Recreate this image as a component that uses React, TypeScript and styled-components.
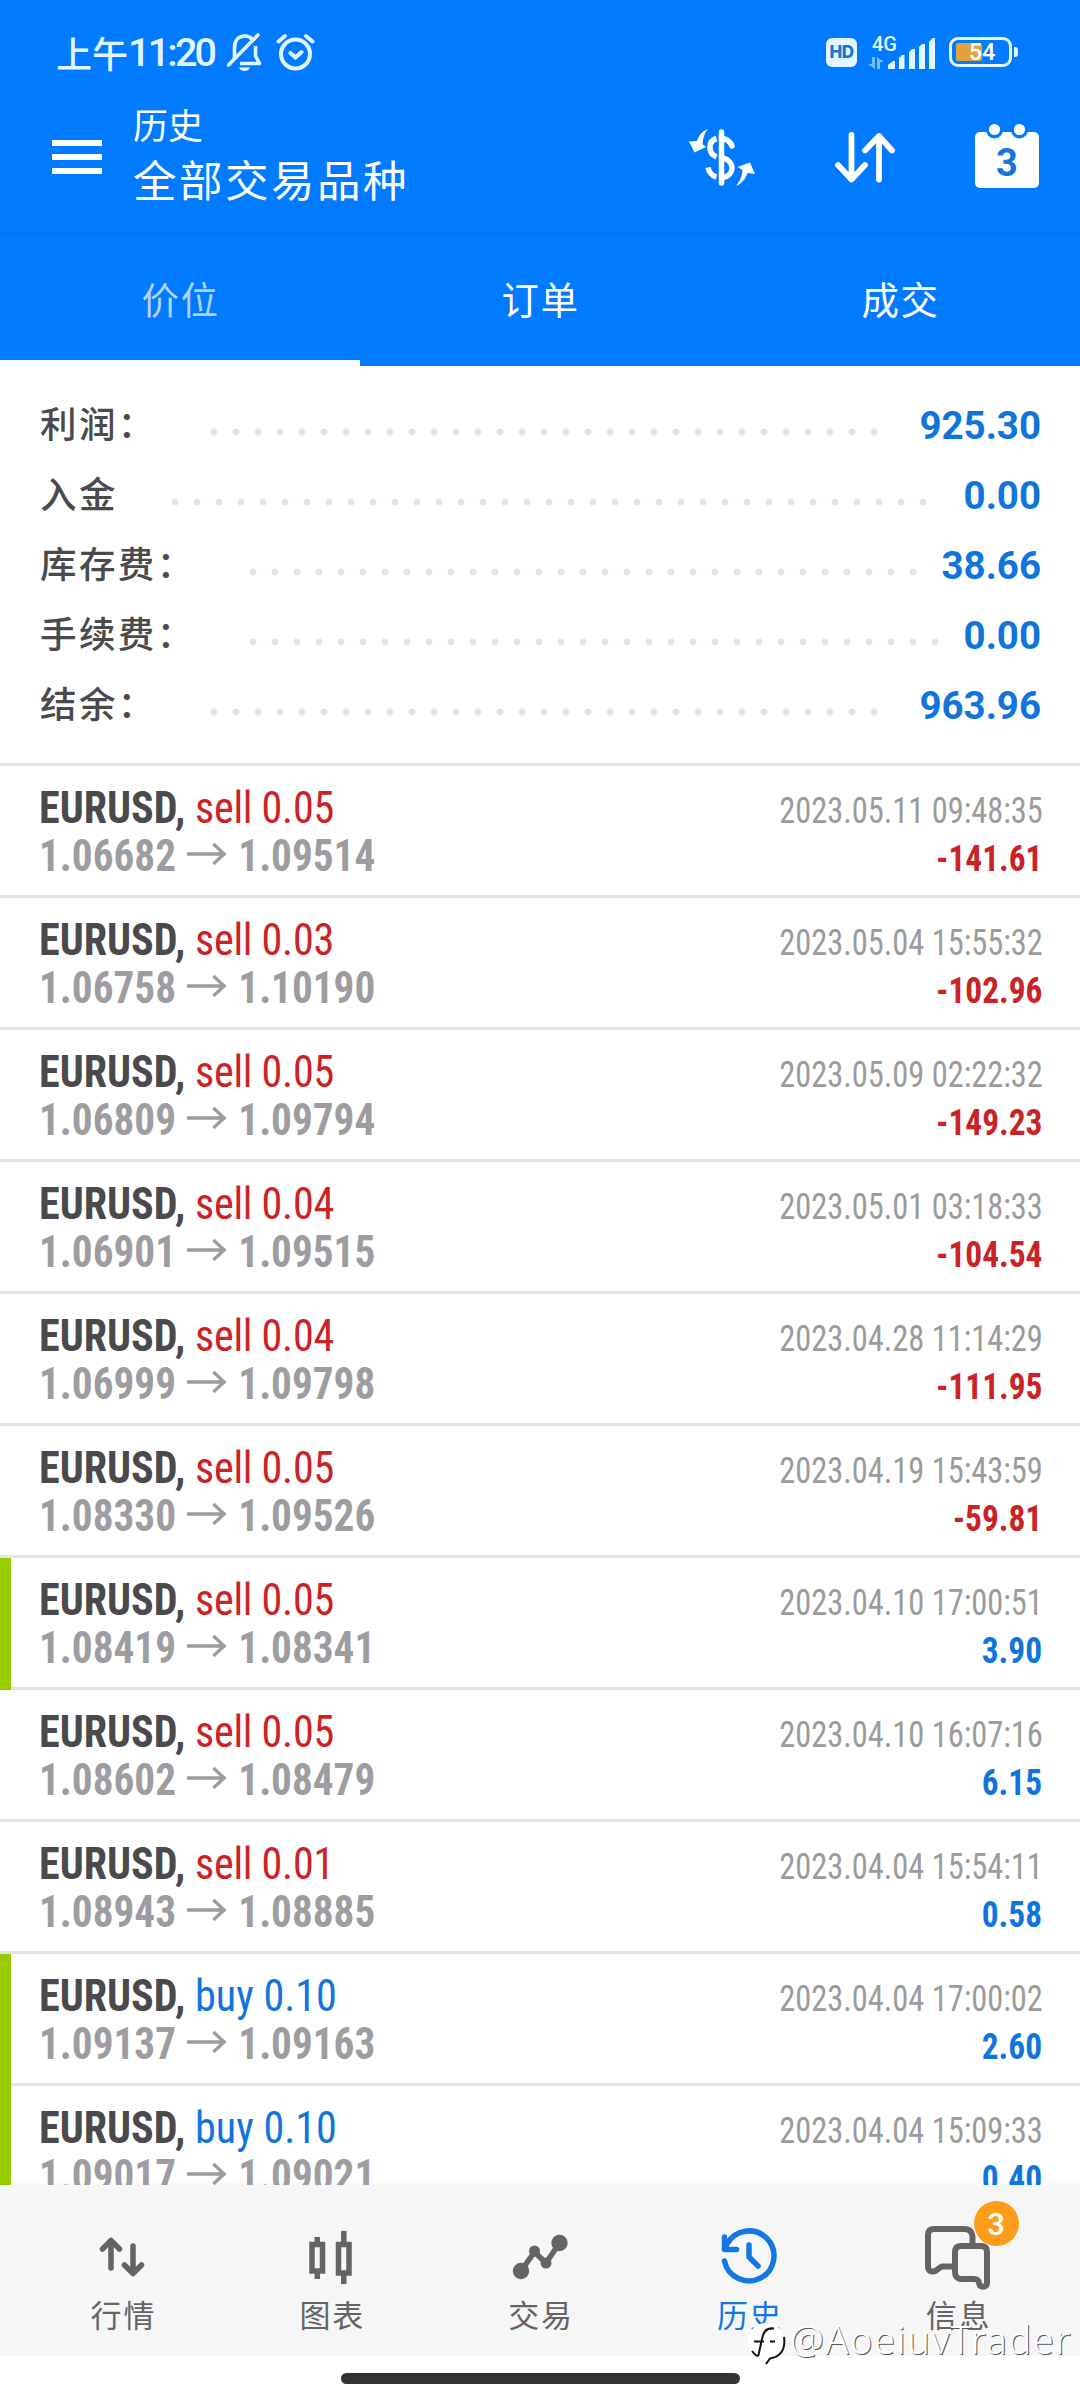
import React from "react";
import styled, { createGlobalStyle } from "styled-components";

const C = {
  blue: "#007aff",
  value: "#0f75dc",
  red: "#cb2226",
  ink: "#4a4a4d",
  grey: "#9d9da1",
  date: "#9b9b9b",
  line: "#e4e4e4",
  nav: "#646464",
  status: "#e2f6ff",
};
const cjk = `"Noto Sans CJK SC", sans-serif`;
const latin = `Roboto, "Noto Sans CJK SC", sans-serif`;
const narrow = `"Roboto Condensed", Roboto, sans-serif`;

const Global = createGlobalStyle`
  * { box-sizing: border-box; }
  body { margin: 0; background: #fff; }
  svg { display: block; flex: none; }
`;

const Screen = styled.div`
  width: 1080px;
  height: 2400px;
  display: flex;
  flex-direction: column;
  overflow: hidden;
  position: relative;
  background: #fff;
`;

const StatusBar = styled.div`
  height: 104px;
  flex: none;
  background: ${C.blue};
  color: ${C.status};
  display: flex;
  align-items: center;
  justify-content: space-between;
  padding: 0 62px 0 56px;
`;
const StatusGroup = styled.div`
  display: flex;
  align-items: center;
`;
const ClockPrefix = styled.span`
  font: 500 36px/50px ${cjk};
`;
const Clock = styled.span`
  font: 500 39.5px/53px ${latin};
  letter-spacing: -2.8px;
  margin-right: 13px;
`;
const HdBadge = styled.span`
  width: 31px;
  height: 29px;
  border-radius: 6px;
  background: ${C.status};
  color: #1b74cf;
  font: 800 17px/29px Inter, sans-serif;
  text-align: center;
  letter-spacing: -0.5px;
  margin-right: 11px;
`;
const Network = styled.div`
  display: flex;
  align-items: flex-end;
  height: 34px;
  margin-right: 14px;
`;
const NetType = styled.div`
  width: 20px;
  height: 34px;
  display: flex;
  flex-direction: column;
  justify-content: space-between;
  font: 500 20px/18px ${latin};
  white-space: nowrap;
`;
const NetLabel = styled.span`
  margin-left: 4px;
`;
const Battery = styled.div`
  width: 63px;
  height: 30px;
  border: 3px solid ${C.status};
  border-radius: 9px;
  padding: 3px 4px;
  position: relative;
  display: flex;
`;
const BatteryFill = styled.div`
  width: 26px;
  background: #dfa23c;
  border-radius: 2px;
`;
const BatteryText = styled.span`
  position: absolute;
  inset: 0 0 0 3px;
  text-align: center;
  color: #fff;
  font: 500 23.5px/25px ${latin};
`;
const BatteryTip = styled.div`
  width: 4px;
  height: 10px;
  margin-left: 2px;
  border-radius: 0 3px 3px 0;
  background: ${C.status};
`;

const Toolbar = styled.header`
  height: 131px;
  flex: none;
  background: ${C.blue};
  border-bottom: 3px solid #0073f0;
  display: flex;
  align-items: flex-start;
  padding: 0 41px 0 52px;
`;
const Burger = styled.div`
  width: 50px;
  margin: 36px 31px 0 0;
  display: grid;
  gap: 8px;
`;
const BurgerBar = styled.i`
  height: 6px;
  background: #fff;
`;
const Titles = styled.div`
  flex: 1;
  color: #fff;
  font-family: ${cjk};
`;
const Subtitle = styled.div`
  font-size: 35px;
  line-height: 39px;
`;
const Title = styled.h1`
  margin: 11px 0 0;
  font-size: 43.5px;
  font-weight: 400;
  line-height: 50px;
  letter-spacing: 2.5px;
`;
const Tools = styled.div`
  display: flex;
  gap: 80px;
  padding-top: 19px;
`;

const Tabs = styled.nav`
  height: 131px;
  flex: none;
  background: ${C.blue};
  display: grid;
  grid-template-columns: repeat(3, 1fr);
`;
const Tab = styled.div<{ $active?: boolean }>`
  height: 131px;
  text-align: center;
  text-indent: 1px;
  font: 400 37.5px/125px ${cjk};
  letter-spacing: 1.4px;
  color: ${(p) => (p.$active ? "#b0d1f5" : "#fff")};
  box-shadow: inset 0 -6px 0 ${(p) => (p.$active ? "#fff" : "transparent")};
`;

const Summary = styled.section`
  height: 400px;
  flex: none;
  padding: 24px 39px 0 40px;
  border-bottom: 3px solid ${C.line};
`;
const SummaryRow = styled.div`
  height: 70px;
  display: flex;
  align-items: flex-start;
`;
const SummaryLabel = styled.span`
  font: 500 36.5px/66px ${cjk};
  letter-spacing: 2.4px;
  color: ${C.ink};
  margin-right: 46px;
`;
const Leader = styled.div<{ $dots: number }>`
  width: ${(p) => p.$dots * 22}px;
  height: 8px;
  margin-top: 38px;
  background: radial-gradient(circle at 11px 4px, #e3e3e5 3px, transparent 4px) 0 0 / 22px 8px repeat-x;
`;
const SummaryValue = styled.span`
  margin-left: auto;
  font: 700 38.5px/71px ${latin};
  color: ${C.value};
`;

const List = styled.main`
  flex: 1;
  min-height: 0;
  overflow: hidden;
`;
const Deal = styled.article<{ $marked?: boolean }>`
  height: 132px;
  padding: 18px 38px 0 39px;
  background:
    linear-gradient(#99cc00, #99cc00) 0 0 / ${(p) => (p.$marked ? 11 : 0)}px 132px no-repeat,
    linear-gradient(${C.line}, ${C.line}) 0 129px / 100% 3px no-repeat;
`;
const Line = styled.div`
  height: 48px;
  line-height: 48px;
  display: flex;
  justify-content: space-between;
  align-items: baseline;
  font-family: ${narrow};
  font-size: 44px;
  white-space: nowrap;
`;
const Order = styled.span`
  transform: scaleX(0.957);
  transform-origin: left;
`;
const Instrument = styled.span`
  font-weight: 700;
  color: ${C.ink};
`;
const Volume = styled.span<{ $side: string }>`
  font-weight: 400;
  letter-spacing: ${(p) => (p.$side === "buy" ? 0 : -0.3)}px;
  color: ${(p) => (p.$side === "buy" ? C.value : C.red)};
`;
const Prices = styled.span`
  font-weight: 700;
  color: ${C.grey};
  display: flex;
  align-items: baseline;
  transform: scaleX(0.937);
  transform-origin: left;
`;
const ArrowSvg = styled.svg`
  margin: 0 11.5px 0 12px;
`;
const DateText = styled.span`
  font-size: 36px;
  color: ${C.date};
  transform: scaleX(0.9);
  transform-origin: right;
  margin-right: -1px;
`;
const Profit = styled.span<{ $loss: boolean }>`
  font-size: 36px;
  font-weight: 700;
  color: ${(p) => (p.$loss ? C.red : C.value)};
  transform: scaleX(0.927);
  transform-origin: right;
`;

const BottomNav = styled.footer`
  height: 171px;
  flex: none;
  background: #f6f6f6;
  box-shadow: 0 -2px 3px rgba(0, 0, 0, 0.03);
  padding: 0 18px;
  display: grid;
  grid-template-columns: repeat(5, 1fr);
`;
const NavItem = styled.div<{ $active?: boolean }>`
  color: ${(p) => (p.$active ? "#1478e4" : C.nav)};
  display: flex;
  flex-direction: column;
  align-items: center;
  padding-top: 36px;
  font: 400 31px/45px ${cjk};
`;
const NavLabel = styled.span`
  letter-spacing: 1.8px;
  padding-left: 2px;
`;
const NavIcon = styled.div`
  height: 70px;
  position: relative;
`;
const Badge = styled.span`
  position: absolute;
  left: 51px;
  top: -20px;
  width: 45px;
  height: 45px;
  border-radius: 50%;
  background: #ff9d1b;
  color: #fff;
  font: 500 31px/47px ${latin};
  text-align: center;
`;

const HomeArea = styled.div`
  height: 44px;
  flex: none;
  display: flex;
  justify-content: center;
  padding-top: 17px;
`;
const HomeBar = styled.div`
  width: 399px;
  height: 11px;
  border-radius: 6px;
  background: #333;
`;

const Watermark = styled.div`
  position: absolute;
  left: 748px;
  top: 2321px;
  display: flex;
  align-items: flex-start;
  gap: 4px;
  color: #fff;
  font: 300 38px/37px "Noto Sans", sans-serif;
  letter-spacing: 1.6px;
  text-shadow: 1px 1px 0 #555;
`;

const BellSvg = styled.svg`
  margin-right: 13px;
`;
const BellOff = () => (
  <BellSvg width="36" height="38" viewBox="0 0 36 38" fill="none" stroke={C.status} strokeWidth="3.6">
    <path d="M7.5 25V15C7.5 8 11 3 17.5 3C21 3 23.5 4.2 25 6.2M28.5 13V23L32.5 30.5H13" strokeLinejoin="round" />
    <path d="M1.5 32L31 2" strokeLinecap="round" />
    <path d="M12 34.5H23C22 37 20 38 17.5 38S13 37 12 34.5Z" fill={C.status} stroke="none" />
  </BellSvg>
);
const Alarm = () => (
  <svg width="40" height="38" viewBox="0 0 40 38" fill="none" stroke={C.status} strokeWidth="4" strokeLinecap="round">
    <circle cx="19.5" cy="21" r="14.5" />
    <path d="M2.5 8.5L9 3M36.5 8.5L30 3M14.5 20L19.5 24.5L25.5 19" />
  </svg>
);
const DataArrows = () => (
  <svg width="16" height="12" viewBox="0 0 16 12" fill="#7dbcfb">
    <path d="M4 0h3v12L0 7h4zM9 0l7 5h-4v7H9z" />
  </svg>
);
const Signal = () => (
  <svg width="47" height="31" viewBox="0 0 47 31" fill={C.status}>
    <path d="M0 31V27L5 23H7V31zM11 31V20L14 17H16.5V31zM21 31V14L24 11H27V31zM31 31V9L34 6H37V31zM41 31V4L44.5 0H47V31z" />
  </svg>
);
const ToolSvg = styled.svg`
  margin-top: 6px;
`;
const Exchange = () => (
  <ToolSvg width="66" height="57" viewBox="0 0 66 57" fill="none" stroke="#fff" strokeWidth="5.5">
    <path d="M32.5 3V54" strokeLinecap="round" />
    <path d="M34 9.5C39 10.5 41.5 13 43 17" strokeLinecap="round" />
    <path d="M27.5 9.5C19 12 18.5 24 27.5 28M34 29C46 32 46 46 34 48.5M27.5 48C22.5 46.5 20 43.5 19 38.5" />
    <path d="M19 0C13 2.5 10 6 8 12L0 12.5L5.5 23.5L17 18L13.5 15C14 8.5 15.5 4 19 0ZM47 57C53 54.5 56.5 50 58.5 44L66 45L61 33.5L48.5 38L53.5 41C53 48 50.5 52.5 47 57Z" fill="#fff" stroke="none" />
  </ToolSvg>
);
const Sort = () => (
  <ToolSvg width="60" height="57" viewBox="0 0 60 57" fill="none" stroke="#fff" strokeWidth="5.8" strokeLinecap="round" strokeLinejoin="round">
    <path d="M16.5 6V50M3 36L16.5 50.5L30 36M44 50.5V8M30 21.5L44 7L57 21.5" />
  </ToolSvg>
);
const CalendarBox = styled.div`
  position: relative;
  width: 64px;
  height: 65px;
`;
const CalendarDay = styled.span`
  position: absolute;
  inset: 19px 0 0 0;
  text-align: center;
  font: 700 38px/42px ${latin};
  color: #1a73d9;
`;
const Calendar = () => (
  <CalendarBox>
    <svg width="64" height="65" viewBox="0 0 64 65">
      <rect x="0" y="9" width="64" height="56" rx="5" fill="#fff" />
      <circle cx="19.5" cy="7" r="8.5" fill={C.blue} />
      <circle cx="44.5" cy="7" r="8.5" fill={C.blue} />
      <circle cx="19.5" cy="6.5" r="5.6" fill="#fff" />
      <circle cx="44.5" cy="6.5" r="5.6" fill="#fff" />
    </svg>
    <CalendarDay>3</CalendarDay>
  </CalendarBox>
);
const Arrow = () => (
  <ArrowSvg width="43" height="28" viewBox="0 0 43 28" fill="none" stroke={C.grey} strokeWidth="3.6">
    <path d="M0 11H40M28 1L39.5 11L28 21" />
  </ArrowSvg>
);

const QuotesIcon = () => (
  <svg width="70" height="70" viewBox="0 0 70 70" fill="none" stroke={C.nav} strokeWidth="5.5" strokeLinecap="round" strokeLinejoin="round">
    <path d="M24 47V20M15.5 28L24 19.5L32.5 28M46 25V52M37.5 44L46 52.5L54.5 44" />
  </svg>
);
const ChartIcon = () => (
  <svg width="70" height="70" viewBox="0 0 70 70" fill="none" stroke={C.nav} strokeWidth="5.5">
    <path d="M16 23.5H26.5V50H16zM21.3 16V21M21.3 52V58M42.5 23.5H53V52H42.5zM47.8 10V21M47.8 54V63" />
  </svg>
);
const TradeIcon = () => (
  <svg width="70" height="70" viewBox="0 0 70 70" fill={C.nav}>
    <path d="M16 50L29.5 31L41 42L54.5 22" fill="none" stroke={C.nav} strokeWidth="5.5" />
    <circle cx="16" cy="50" r="8.2" />
    <circle cx="54.5" cy="22" r="8.2" />
    <circle cx="29.5" cy="30" r="5.5" />
    <circle cx="41" cy="42" r="5.5" />
  </svg>
);
const HistoryIcon = () => (
  <svg width="70" height="70" viewBox="0 0 70 70" fill="none" stroke="#1478e4" strokeWidth="5.5" strokeLinecap="round" strokeLinejoin="round">
    <path d="M10.5 40A25 25 0 1 0 13 23L10.5 28M10.5 16V28.5H22.5M35 24V36L44 45" />
  </svg>
);
const MessagesIcon = () => (
  <svg width="70" height="70" viewBox="0 0 70 70" fill="none" stroke={C.nav} strokeWidth="6" strokeLinejoin="round" strokeLinecap="round">
    <path d="M28 45.5H19C16 46 14 50.5 10 50.5C7 50.5 5 49 5 46V14C5 10 7 8 11 8H41C46 8 49 10 49.5 15V22" />
    <path d="M38 25H58C62 25 64 27 64 31V62C64 67 57 67 56 62C55.5 59 54.5 58 51 58H38C34 58 32 55 32 51V31C32 27 34 25 38 25Z" />
  </svg>
);
const WatermarkLogo = () => (
  <svg width="38" height="44" viewBox="0 0 38 44" fill="none">
    <circle cx="18" cy="20" r="18" fill="#fff" />
    <path d="M26 7.5C18 6.5 15 11 14 18L10.5 34C9.5 36 7 34 4 30M6 20.5H16M22 20.5H27M36 16C38 30 31 36 22 37.5L18 43" stroke="#111" strokeWidth="2" />
  </svg>
);

const totals = [
  { label: "利润：", dots: 31, value: "925.30" },
  { label: "入金", dots: 35, value: "0.00" },
  { label: "库存费：", dots: 31, value: "38.66" },
  { label: "手续费：", dots: 32, value: "0.00" },
  { label: "结余：", dots: 31, value: "963.96" },
];

const deals = [
  { side: "sell", lot: "0.05", open: "1.06682", close: "1.09514", time: "2023.05.11 09:48:35", profit: "-141.61" },
  { side: "sell", lot: "0.03", open: "1.06758", close: "1.10190", time: "2023.05.04 15:55:32", profit: "-102.96" },
  { side: "sell", lot: "0.05", open: "1.06809", close: "1.09794", time: "2023.05.09 02:22:32", profit: "-149.23" },
  { side: "sell", lot: "0.04", open: "1.06901", close: "1.09515", time: "2023.05.01 03:18:33", profit: "-104.54" },
  { side: "sell", lot: "0.04", open: "1.06999", close: "1.09798", time: "2023.04.28 11:14:29", profit: "-111.95" },
  { side: "sell", lot: "0.05", open: "1.08330", close: "1.09526", time: "2023.04.19 15:43:59", profit: "-59.81" },
  { side: "sell", lot: "0.05", open: "1.08419", close: "1.08341", time: "2023.04.10 17:00:51", profit: "3.90", marked: true },
  { side: "sell", lot: "0.05", open: "1.08602", close: "1.08479", time: "2023.04.10 16:07:16", profit: "6.15" },
  { side: "sell", lot: "0.01", open: "1.08943", close: "1.08885", time: "2023.04.04 15:54:11", profit: "0.58" },
  { side: "buy", lot: "0.10", open: "1.09137", close: "1.09163", time: "2023.04.04 17:00:02", profit: "2.60", marked: true },
  { side: "buy", lot: "0.10", open: "1.09017", close: "1.09021", time: "2023.04.04 15:09:33", profit: "0.40", marked: true },
];

const navItems = [
  { label: "行情", Icon: QuotesIcon },
  { label: "图表", Icon: ChartIcon },
  { label: "交易", Icon: TradeIcon },
  { label: "历史", Icon: HistoryIcon, active: true },
  { label: "信息", Icon: MessagesIcon, badge: "3" },
];

export default function App() {
  return (
    <Screen>
      <Global />
      <StatusBar>
        <StatusGroup>
          <ClockPrefix>上午</ClockPrefix>
          <Clock>11:20</Clock>
          <BellOff />
          <Alarm />
        </StatusGroup>
        <StatusGroup>
          <HdBadge>HD</HdBadge>
          <Network>
            <NetType>
              <NetLabel>4G</NetLabel>
              <DataArrows />
            </NetType>
            <Signal />
          </Network>
          <Battery>
            <BatteryFill />
            <BatteryText>54</BatteryText>
          </Battery>
          <BatteryTip />
        </StatusGroup>
      </StatusBar>
      <Toolbar>
        <Burger>
          <BurgerBar />
          <BurgerBar />
          <BurgerBar />
        </Burger>
        <Titles>
          <Subtitle>历史</Subtitle>
          <Title>全部交易品种</Title>
        </Titles>
        <Tools>
          <Exchange />
          <Sort />
          <Calendar />
        </Tools>
      </Toolbar>
      <Tabs>
        <Tab $active>价位</Tab>
        <Tab>订单</Tab>
        <Tab>成交</Tab>
      </Tabs>
      <Summary>
        {totals.map((t) => (
          <SummaryRow key={t.label}>
            <SummaryLabel>{t.label}</SummaryLabel>
            <Leader $dots={t.dots} />
            <SummaryValue>{t.value}</SummaryValue>
          </SummaryRow>
        ))}
      </Summary>
      <List>
        {deals.map((d) => (
          <Deal key={d.time} $marked={d.marked}>
            <Line>
              <Order>
                <Instrument>EURUSD, </Instrument>
                <Volume $side={d.side}>
                  {d.side} {d.lot}
                </Volume>
              </Order>
              <DateText>{d.time}</DateText>
            </Line>
            <Line>
              <Prices>
                {d.open}
                <Arrow />
                {d.close}
              </Prices>
              <Profit $loss={d.profit.startsWith("-")}>{d.profit}</Profit>
            </Line>
          </Deal>
        ))}
      </List>
      <BottomNav>
        {navItems.map(({ label, Icon, active, badge }) => (
          <NavItem key={label} $active={active}>
            <NavIcon>
              <Icon />
              {badge && <Badge>{badge}</Badge>}
            </NavIcon>
            <NavLabel>{label}</NavLabel>
          </NavItem>
        ))}
      </BottomNav>
      <HomeArea>
        <HomeBar />
      </HomeArea>
      <Watermark>
        <WatermarkLogo />
        @AoeiuvTrader
      </Watermark>
    </Screen>
  );
}
